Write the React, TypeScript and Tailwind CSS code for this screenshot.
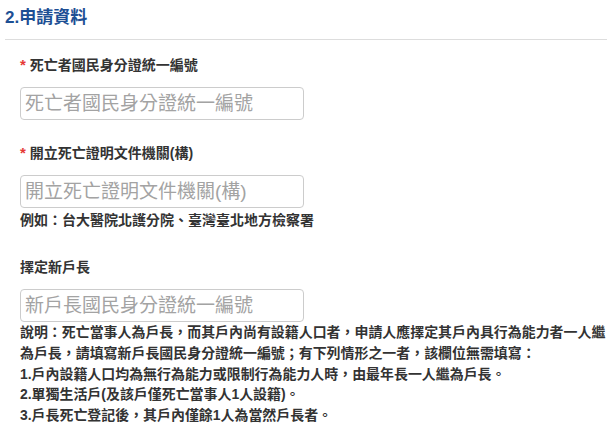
import React from "react";

const font = { fontFamily: '"Liberation Sans", "Noto Sans CJK TC", sans-serif' };

interface FieldProps {
    label: string;
    placeholder: string;
    required?: boolean;
    className?: string;
};

// 欄位 //
function Field({ label, placeholder, required, className }: FieldProps) {
    return (
        <div className={className}>
            <div className="text-[14px] leading-[20px] font-bold text-[#333]">
                {required && <span className="text-[15px] text-[#e53935] mr-[4px]">*</span>}
                {label}
            </div>
            <input
                type="text"
                placeholder={placeholder}
                className="mt-[12px] block w-[284px] h-[33px] px-[4px] border border-[#cccccc] rounded-[4px] bg-white text-[19px] text-[#333] placeholder:text-[#a3a3a3] outline-none" />
        </div>
    );
};

export default function App() {
    return (
        <div className="w-[607px] h-[428px] bg-white overflow-hidden" style={font}>
            <div className="pl-[5px]">
                <h2 className="pt-[6px] text-[17px] leading-[24px] font-bold text-[#1d4f94]">
                    2.申請資料
                </h2>
                <div className="mt-[9px] border-t border-[#dddddd]" />
            </div>
            <div className="pl-[20px]">
                <Field
                    className="mt-[15px]"
                    required
                    label="死亡者國民身分證統一編號"
                    placeholder="死亡者國民身分證統一編號" />
                <Field
                    className="mt-[23px]"
                    required
                    label="開立死亡證明文件機關(構)"
                    placeholder="開立死亡證明文件機關(構)" />
                <p className="mt-[2px] text-[14px] leading-[20px] font-bold text-[#333]">
                    例如：台大醫院北護分院、臺灣臺北地方檢察署
                </p>
                <Field
                    className="mt-[27px]"
                    label="擇定新戶長"
                    placeholder="新戶長國民身分證統一編號" />
                <div className="text-[13.95px] leading-[20.75px] font-bold text-[#333]">
                    <p>說明：死亡當事人為戶長，而其戶內尚有設籍人口者，申請人應擇定其戶內具行為能力者一人繼為戶長，請填寫新戶長國民身分證統一編號；有下列情形之一者，該欄位無需填寫：</p>
                    <p>1.戶內設籍人口均為無行為能力或限制行為能力人時，由最年長一人繼為戶長。</p>
                    <p>2.單獨生活戶(及該戶僅死亡當事人1人設籍)。</p>
                    <p>3.戶長死亡登記後，其戶內僅餘1人為當然戶長者。</p>
                </div>
            </div>
        </div>
    );
};
